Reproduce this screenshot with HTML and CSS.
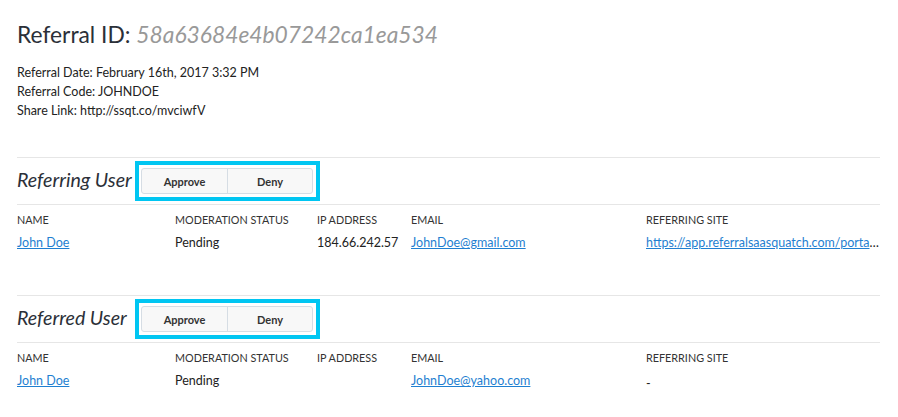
FILE: index.html
```html
<!DOCTYPE html>
<html>
<head>
<meta charset="utf-8">
<link rel="stylesheet" href="styles.css">
</head>
<body>
<div class="page">
  <h1 class="title">Referral ID: <span class="rid">58a63684e4b07242ca1ea534</span></h1>
  <div class="info">
    <div>Referral Date: February 16th, 2017 3:32 PM</div>
    <div>Referral Code: JOHNDOE</div>
    <div>Share Link: http://ssqt.co/mvciwfV</div>
  </div>

  <section class="section first">
    <div class="sec-head">
      <h2 class="sec-title">Referring User</h2>
      <div class="highlight">
        <div class="btn-group">
          <button class="btn">Approve</button>
          <button class="btn">Deny</button>
        </div>
      </div>
    </div>
    <div class="table">
      <div class="th">NAME</div>
      <div class="th">MODERATION STATUS</div>
      <div class="th">IP ADDRESS</div>
      <div class="th">EMAIL</div>
      <div class="th">REFERRING SITE</div>
      <div class="td"><a href="#">John Doe</a></div>
      <div class="td">Pending</div>
      <div class="td">184.66.242.57</div>
      <div class="td"><a href="#">JohnDoe@gmail.com</a></div>
      <div class="td trunc"><a href="#">https://app.referralsaasquatch.com/portal/referrals</a></div>
    </div>
  </section>

  <section class="section">
    <div class="sec-head">
      <h2 class="sec-title">Referred User</h2>
      <div class="highlight">
        <div class="btn-group">
          <button class="btn">Approve</button>
          <button class="btn">Deny</button>
        </div>
      </div>
    </div>
    <div class="table">
      <div class="th">NAME</div>
      <div class="th">MODERATION STATUS</div>
      <div class="th">IP ADDRESS</div>
      <div class="th">EMAIL</div>
      <div class="th">REFERRING SITE</div>
      <div class="td"><a href="#">John Doe</a></div>
      <div class="td">Pending</div>
      <div class="td"></div>
      <div class="td"><a href="#">JohnDoe@yahoo.com</a></div>
      <div class="td dash">-</div>
    </div>
  </section>
</div>
</body>
</html>
```
FILE: styles.css
```css
* { box-sizing: border-box; }
html, body { margin: 0; padding: 0; background: #fff; }
body {
  font-family: Lato, "Liberation Sans", sans-serif;
  color: #222;
}
.page {
  width: 880px;
  padding: 20px 0 0 17px;
}
.title {
  margin: 0;
  font-size: 22.8px;
  font-weight: 400;
  line-height: 28px;
  color: #2b3038;
}
.rid {
  font-style: italic;
  color: #999;
}
.info {
  margin-top: 15px;
  font-size: 12.5px;
  line-height: 19px;
  color: #222;
}
.section {
  margin-top: 43px;
}
.section.first { margin-top: 37px; }
.sec-head {
  display: flex;
  align-items: center;
  border-top: 1px solid #e6e6e6;
  border-bottom: 1px solid #e6e6e6;
  padding: 3px 0 3px;
}
.sec-title {
  margin: 0 0 4px 0;
  width: 118px;
  flex: none;
  white-space: nowrap;
  font-size: 19.6px;
  font-weight: 400;
  font-style: italic;
  color: #2b3038;
}
.highlight {
  border: 4px solid #00c6f2;
  padding: 3px 3px 3px 2px;
}
.btn-group {
  display: flex;
  border: 1px solid #d6dde4;
  border-radius: 3px;
  background: #f8f8f8;
  overflow: hidden;
}
.btn {
  width: 85px;
  height: 24px;
  border: 0;
  background: transparent;
  font-family: inherit;
  font-size: 11px;
  font-weight: 700;
  color: #333;
  padding: 0;
}
.btn + .btn { border-left: 1px solid #d6dde4; }
.table {
  display: grid;
  grid-template-columns: 158px 142px 94px 235px 234px;
  padding-top: 8px;
}
.th {
  font-size: 10.8px;
  color: #333;
  line-height: 14px;
}
.td {
  font-size: 12.5px;
  line-height: 18px;
  padding-top: 7px;
  color: #222;
}
.td a { color: #1f7fd1; }
.trunc {
  white-space: nowrap;
  overflow: hidden;
  text-overflow: ellipsis;
}
.dash { padding-top: 10px; }
```
